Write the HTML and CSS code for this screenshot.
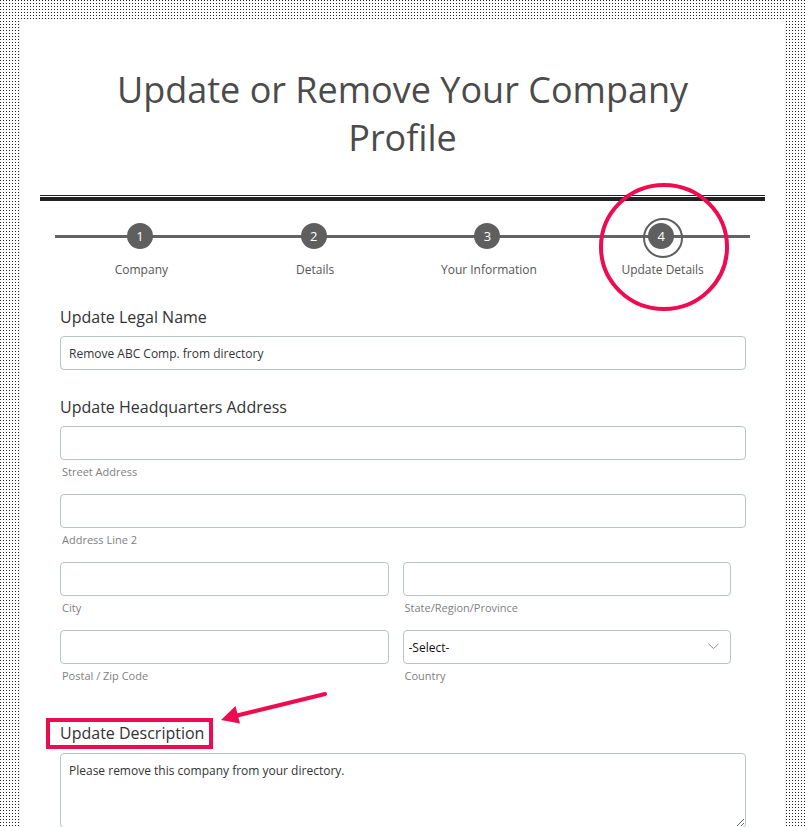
FILE: index.html
```html
<!DOCTYPE html>
<html>
  <head>
    <meta name="viewport" content="width=device-width, initial-scale=1" />
    <link rel="stylesheet" href="styles.css">
  </head>
  <body>
    <div class="page">
      <div class="panel">
        <h1 class="title">Update or Remove Your Company Profile</h1>
        <div class="rule"></div>

        <ol class="steps">
          <li class="step"><span class="dot">1</span><span class="step-name">Company</span></li>
          <li class="step"><span class="dot">2</span><span class="step-name">Details</span></li>
          <li class="step"><span class="dot">3</span><span class="step-name">Your Information</span></li>
          <li class="step current">
            <span class="dot">4</span><span class="step-name">Update Details</span>
            <svg class="mark-circle" width="134" height="134" viewBox="0 0 134 134">
              <ellipse cx="67" cy="67" rx="63" ry="62" fill="none" stroke="#ee0b50" stroke-width="4" />
            </svg>
          </li>
        </ol>

        <form class="form">
          <div class="field">
            <label class="field-label" for="legal-name">Update Legal Name</label>
            <input type="text" id="legal-name" class="box" value="Remove ABC Comp. from directory" />
          </div>

          <div class="field">
            <label class="field-label" for="street">Update Headquarters Address</label>
            <div class="part">
              <input type="text" id="street" class="box" />
              <span class="hint">Street Address</span>
            </div>
            <div class="part">
              <input type="text" id="line2" class="box" />
              <span class="hint">Address Line 2</span>
            </div>
            <div class="pair">
              <div class="part">
                <input type="text" id="city" class="box" />
                <span class="hint">City</span>
              </div>
              <div class="part">
                <input type="text" id="state" class="box" />
                <span class="hint">State/Region/Province</span>
              </div>
              <div class="part">
                <input type="text" id="zip" class="box" />
                <span class="hint">Postal / Zip Code</span>
              </div>
              <div class="part">
                <div class="select-wrap">
                  <select id="country" class="box select">
                    <option>-Select-</option>
                  </select>
                  <svg class="chevron" width="11" height="7" viewBox="0 0 11 7">
                    <path d="M0.5 0.8 L5.5 5.6 L10.5 0.8" fill="none" stroke="#8a8a8a" stroke-width="1" />
                  </svg>
                </div>
                <span class="hint">Country</span>
              </div>
            </div>
          </div>

          <div class="field desc-field">
            <svg class="mark-arrow" width="120" height="44" viewBox="0 0 120 44">
              <line x1="110" y1="6" x2="20" y2="28" stroke="#ee0b50" stroke-width="4" stroke-linecap="round" />
              <polygon points="6,32 25,35.5 20.5,18" fill="#ee0b50" />
            </svg>
            <label class="field-label marked" for="desc">Update Description</label>
            <textarea id="desc" class="box area">Please remove this company from your directory.</textarea>
          </div>
        </form>
      </div>
    </div>
  </body>
</html>
```

FILE: styles.css
```css
* {
  box-sizing: border-box;
}

body {
  margin: 0;
  font-family: "Open Sans", Arial, Helvetica, sans-serif;
  background-color: #fff;
  background-image: conic-gradient(from 270deg at 1px 1px, #222 90deg, #fff 0);
  background-size: 3px 3px;
}

.page {
  padding: 19px 20px 0 20px;
}

/* White sheet holding the form */
.panel {
  background-color: white;
  padding: 47px 20px 40px 20px;
  min-height: 900px;
  box-shadow: 0 0 2px rgba(0, 0, 0, 0.18);
}

.title {
  margin: 0;
  padding: 0 60px;
  font-size: 36px;
  font-weight: 400;
  line-height: 48px;
  text-align: center;
  color: #4b4b4b;
}

/* Double line under the heading */
.rule {
  margin-top: 33px;
  height: 6px;
  border-top: 1px solid #222;
  border-bottom: 4px solid #222;
}

/* Progress steps */
.steps {
  list-style: none;
  position: relative;
  display: grid;
  grid-template-columns: repeat(4, 1fr);
  margin: 22px 17px 0 13px;
  padding: 0;
}

.steps::before {
  content: "";
  position: absolute;
  left: 2px;
  right: -2px;
  top: 11.5px;
  height: 3px;
  background-color: #636363;
}

.step {
  position: relative;
  display: flex;
  flex-direction: column;
  align-items: center;
}

.dot {
  position: relative;
  width: 26px;
  height: 26px;
  border-radius: 50%;
  background-color: #5f5f5f;
  color: white;
  font-size: 13px;
  line-height: 26px;
  text-align: center;
}

.current .dot::after {
  content: "";
  position: absolute;
  left: -5px;
  top: -5px;
  width: 36px;
  height: 36px;
  border: 2px solid #5f5f5f;
  border-radius: 50%;
}

.step-name {
  margin-top: 12px;
  padding-left: 3px;
  font-size: 12px;
  line-height: 17px;
  color: #555;
}

.mark-circle {
  position: absolute;
  left: 23px;
  top: -43px;
}

/* Form fields */
.form {
  padding: 0 19px 0 20px;
  margin-top: 28px;
}

.field {
  margin-bottom: 26px;
}

.field-label {
  display: block;
  font-size: 16px;
  line-height: 22px;
  color: #333;
  margin-bottom: 8px;
}

.box {
  display: block;
  width: 100%;
  height: 34px;
  padding: 0 8px;
  border: 1px solid #b9c5c3;
  border-radius: 4px;
  background: white;
  font-family: "Open Sans", Arial, sans-serif;
  font-size: 12px;
  color: #333;
}

.part {
  margin-bottom: 15px;
}

.hint {
  display: block;
  margin-top: 4px;
  padding-left: 2px;
  font-size: 11px;
  line-height: 15px;
  color: #808080;
}

.pair {
  display: grid;
  grid-template-columns: 1fr 1fr;
  column-gap: 14px;
  margin-right: 15px;
}

.select-wrap {
  position: relative;
}

.select {
  appearance: none;
  -webkit-appearance: none;
  padding-left: 5px;
  color: #111;
}

.chevron {
  position: absolute;
  right: 12px;
  top: 13px;
}

.desc-field {
  position: relative;
  margin-top: -6px;
}

.marked {
  display: inline-block;
  margin: 0 0 4px -14px;
  padding: 0 5px 0 10px;
  border: 4px solid #ee0b50;
  line-height: 23px;
}

.mark-arrow {
  position: absolute;
  left: 155px;
  top: -30px;
}

.area {
  height: 75px;
  padding: 8px;
  resize: vertical;
  line-height: 17px;
}
```
